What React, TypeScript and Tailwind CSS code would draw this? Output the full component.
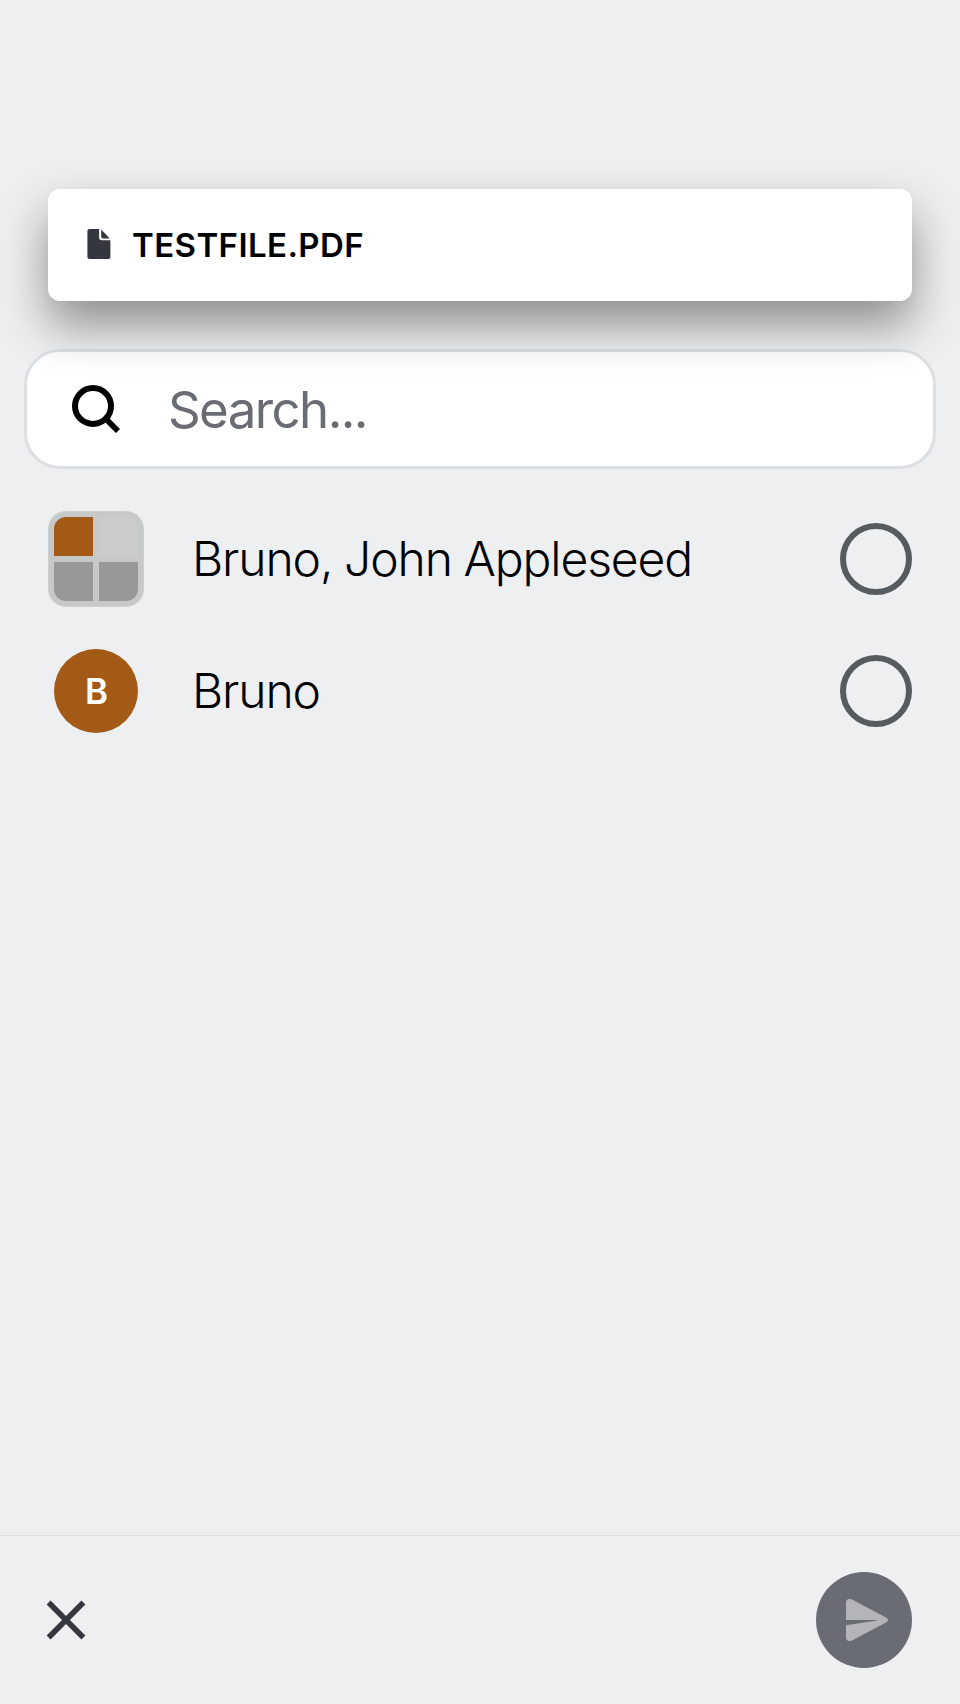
const conversations = [
  { name: "Bruno, John Appleseed", group: true },
  { name: "Bruno", group: false },
];

function GroupAvatar() {
  return (
    <div className="grid size-24 grid-cols-2 gap-1.5 rounded-[18px] border border-[#ced0d0] bg-[#c7c9c8] p-[5px]">
      <div className="rounded-tl-[12px] bg-[#a35a16]" />
      <div className="rounded-tr-[12px] bg-[#cbcbcb]" />
      <div className="rounded-bl-[12px] bg-[#979998]" />
      <div className="rounded-br-[12px] bg-[#979998]" />
    </div>
  );
}

function UserAvatar({ initial }: { initial: string }) {
  return (
    <div className="mx-1.5 flex size-[84px] items-center justify-center rounded-full bg-[#a35a16] pl-px text-[35px] leading-none font-semibold text-white">
      {initial}
    </div>
  );
}

export default function App() {
  return (
    <div className="flex h-[1704px] w-[960px] flex-col overflow-hidden bg-[#edeff0] font-['Inter',sans-serif] text-black">
      <header className="relative z-10 mx-12 mt-[189px] flex h-28 shrink-0 items-center rounded-[12px] bg-white pl-[39px] shadow-[0_24px_48px_rgba(3,5,2,0.41)]">
        <svg className="mt-[-2px] h-[30px] w-6" viewBox="0 0 24 30" fill="#34373d">
          <g transform="translate(0.4 0)">
            <path d="M2 0H11.7V8.5Q11.7 11.3 14.5 11.3H23V28Q23 30 21 30H2Q0 30 0 28V2Q0 0 2 0Z" />
            <path d="M13.8 0.4L22.4 9.4H15.5Q13.8 9.4 13.8 7.7Z" />
          </g>
        </svg>
        <h1 className="ml-[21px] pt-px text-[33px] leading-none font-semibold tracking-[0.4px]">TESTFILE.PDF</h1>
      </header>

      <label className="mx-6 mt-12 flex h-[120px] shrink-0 items-center rounded-[36px] border-[3px] border-[#dce0e3] bg-white">
        <svg className="ml-[45px] size-12" viewBox="0 0 48 48" fill="none" stroke="#000" strokeWidth="6">
          <circle cx="21" cy="21" r="18" />
          <path d="M33.5 33.5L46 46" strokeWidth="5.8" />
        </svg>
        <span className="ml-12 text-[51px] leading-none tracking-[-1.6px] text-[#696c73]">Search...</span>
      </label>

      <main className="flex-1 pt-6">
        {conversations.map(({ name, group }) => (
          <div key={name} className="flex h-33 items-center px-12">
            {group ? <GroupAvatar /> : <UserAvatar initial="B" />}
            <span className="ml-12 flex-1 text-[48px] leading-none font-light tracking-[-1.1px] [word-spacing:-0.7px]">{name}</span>
            <span className="size-18 rounded-full border-[6px] border-[#565b60]" />
          </div>
        ))}
      </main>

      <footer className="flex h-[169px] items-center justify-between border-t border-[#dcdedf] px-12">
        <button aria-label="Close" className="ml-[-2px]">
          <svg className="size-10" viewBox="0 0 40 40" stroke="#34373d" strokeWidth="5.6">
            <path d="M2.6 2.6L37.4 37.4M37.4 2.6L2.6 37.4" />
          </svg>
        </button>
        <button aria-label="Send" className="flex size-24 items-center justify-center rounded-full bg-[#696c73]">
          <svg className="ml-[6px] h-[42px] w-[42px]" viewBox="0 0 42 42" fill="#b4b5b9">
            <path d="M0 21V4Q0 0 3.5 0Q5 0 7 1L39.5 18.3Q42 19.5 42 21Q42 22.5 39.5 23.8L7 41Q5 42 3.5 42Q0 42 0 38V26.3L31 21.4V21Z" />
          </svg>
        </button>
      </footer>
    </div>
  );
}
